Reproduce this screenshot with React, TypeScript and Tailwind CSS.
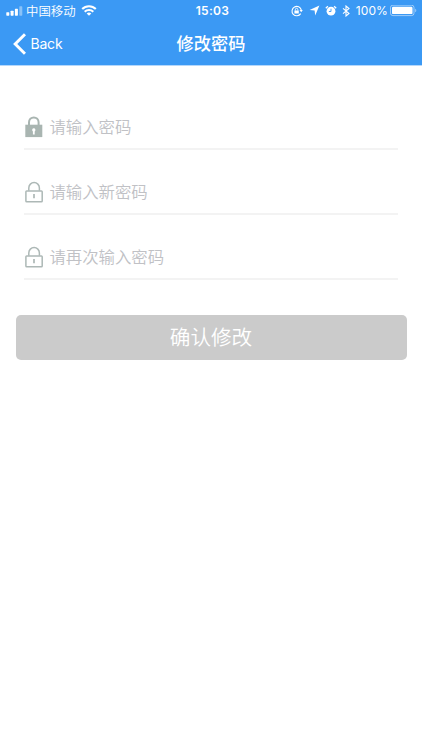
const fields = [
  { label: '请输入密码', filled: true },
  { label: '请输入新密码', filled: false },
  { label: '请再次输入密码', filled: false },
];

function LockIcon({ filled }: { filled: boolean }) {
  if (filled) {
    return (
      <svg width="18" height="22" viewBox="0 0 18 22" fill="none">
        <path d="M4 9V6.2a4.8 4.8 0 0 1 9.6 0V9" stroke="#a9b5b1" strokeWidth="2" />
        <path d="M.3 8.7h17v12.4H.3z" fill="#a9b5b1" />
        <path d="M8.8 12.3a1.7 1.7 0 0 1 .9 3.1v3.1H7.9v-3.1a1.7 1.7 0 0 1 .9-3.1z" fill="#fff" />
      </svg>
    );
  }
  return (
    <svg width="18" height="22" viewBox="0 0 18 22" fill="none" stroke="#adb8b6">
      <path d="M3.8 9.8V6.9a5.3 5.3 0 0 1 10.6 0v2.9" strokeWidth="1.5" />
      <rect x=".9" y="10" width="16.3" height="10.7" rx=".8" strokeWidth="1.5" />
      <path d="M9 13v4.3" strokeWidth="1.7" />
    </svg>
  );
}

function StatusBar() {
  return (
    <div className="grid h-[22px] grid-cols-[1fr_auto_1fr] items-center pr-[5px] pb-px pl-[6px]">
      <div className="flex items-center">
        <svg width="17" height="10" viewBox="0 0 17 10" fill="#fff">
          <rect x=".3" y="6.2" width="3" height="3.5" rx=".6" />
          <rect x="4.6" y="4.7" width="3" height="5" rx=".6" />
          <rect x="8.9" y="2.8" width="3" height="6.9" rx=".6" />
          <rect x="13.3" y=".3" width="3" height="9.4" rx=".6" opacity=".4" />
        </svg>
        <span className="ml-[3px] pt-[2px] text-[12.4px] leading-[18px] font-[350]">中国移动</span>
        <svg className="ml-[5px]" width="16" height="11" viewBox="0 0 16 11" fill="none" stroke="#fff" strokeWidth="2.1">
          <path d="M1.2 4a9.6 9.6 0 0 1 13.6 0" />
          <path d="M3.7 6.8a6.2 6.2 0 0 1 8.6 0" />
          <path d="M8 10.8 5.7 8.5a3.3 3.3 0 0 1 4.6 0z" fill="#fff" stroke="none" />
        </svg>
      </div>
      <span className="pt-px pl-[2px] text-[12px] leading-[18px] font-semibold tracking-[0.3px]">15:03</span>
      <div className="flex items-center justify-end">
        <svg width="12" height="12" viewBox="0 0 12 12" fill="none" stroke="#fff">
          <path d="M9.7 8.6A4.7 4.7 0 1 1 10.3 5" strokeWidth="1.1" />
          <path d="M8.5 5h3.3l-1.6 2.2z" fill="#fff" stroke="none" />
          <path d="M3.4 5.5h4.4v3H3.4z" fill="#fff" stroke="none" />
          <path d="M4.4 5.5v-1a1.2 1.2 0 0 1 2.4 0v1" strokeWidth=".9" />
        </svg>
        <svg className="ml-[6px]" width="11" height="11" viewBox="0 0 11 11" fill="#fff">
          <path d="M10.4.6 6.2 10.4 5.6 5.5.6 5z" />
        </svg>
        <svg className="ml-[5px]" width="12" height="12" viewBox="0 0 12 12">
          <circle cx="6" cy="6.2" r="4.4" fill="#fff" />
          <path d="M.8 3.2 2.9 1.2M11.2 3.2 9.1 1.2" stroke="#fff" strokeWidth="1.3" />
          <path d="M6 3.7v2.8H3.9" fill="none" stroke="#3b99f4" strokeWidth=".9" />
        </svg>
        <svg className="ml-[5px]" width="8" height="12" viewBox="0 0 8 12" fill="none" stroke="#fff" strokeWidth="1.1">
          <path d="M1 3.3 7 8.5 4 11V1l3 2.5L1 8.7" />
        </svg>
        <span className="ml-[6px] pt-px text-[12px] leading-[18px] tracking-[0.1px]">100%</span>
        <svg className="ml-[2px]" width="27" height="12" viewBox="0 0 27 12">
          <rect x=".5" y=".2" width="23.5" height="10.4" rx="2.4" fill="none" stroke="#fff" strokeOpacity=".5" />
          <rect x="2" y="1.7" width="20.5" height="7.4" rx="1.2" fill="#fff" />
          <path d="M25.2 3.7c1.5.6 1.5 2.9 0 3.5z" fill="#fff" fillOpacity=".5" />
        </svg>
      </div>
    </div>
  );
}

export default function App() {
  return (
    <div className="h-[750px] w-[422px] bg-white font-[Inter,'Noto_Sans_CJK_SC',sans-serif]">
      <header className="h-[66px] border-b border-[#b4d7fb] bg-[#3b99f4] text-white">
        <StatusBar />
        <div className="grid h-[43px] grid-cols-[1fr_auto_1fr] items-center">
          <button className="flex items-center pl-[13px]">
            <svg width="13" height="22" viewBox="0 0 13 22" fill="none" stroke="#fff" strokeWidth="3">
              <path d="M12 1.2 2.2 11 12 20.8" />
            </svg>
            <span className="ml-[4.5px] text-[14px] tracking-[-0.2px]">Back</span>
          </button>
          <h1 className="text-[17.2px] font-medium">修改密码</h1>
        </div>
      </header>

      <main className="pt-[18.4px]">
        <div className="pr-6 pl-6">
          {fields.map((field) => (
            <div key={field.label} className="flex h-[65.2px] items-end border-b-2 border-[#f3f3f3] pb-[9px]">
              <div className="flex items-center pl-px">
                <LockIcon filled={field.filled} />
                <span className="ml-[6.4px] text-[16.4px] leading-6 font-[350] text-[#c0c1c5]">{field.label}</span>
              </div>
            </div>
          ))}
        </div>
        <button className="mt-[35px] ml-[15.5px] flex h-[45px] w-[391px] items-center justify-center rounded-[5px] bg-[#cbcbcb] pt-[2px] text-[20.6px] font-[350] text-white">
          确认修改
        </button>
      </main>
    </div>
  );
}
